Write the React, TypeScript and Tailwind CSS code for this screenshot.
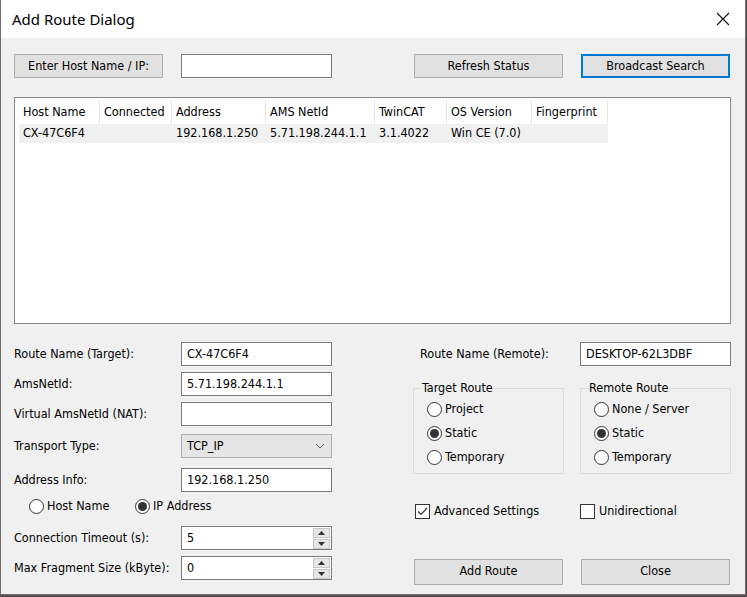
import React from "react";

const ui = { fontFamily: '"DejaVu Sans Condensed", "DejaVu Sans", sans-serif' };

function Btn({ label, w = "w-[149px]", focus = false }: { label: string; w?: string; focus?: boolean }) {
	return (
		<div
			className={`${w} h-[24px] flex items-center justify-center bg-[#e1e1e1] text-[12.5px] text-black ${
				focus ? "border-2 border-[#0078d7]" : "border border-[#adadad]"
			}`}
		>
			{label}
		</div>
	);
}

function TextBox({ value = "", w = "w-[151px]" }: { value?: string; w?: string }) {
	return (
		<div className={`${w} h-[24px] flex items-center border border-[#7a7a7a] bg-white pl-[5px] text-[12.5px] text-black`}>
			{value}
		</div>
	);
}

function Spin({ value }: { value: string }) {
	return (
		<div className="w-[151px] h-[24px] flex items-center border border-[#7a7a7a] bg-white pl-[5px] text-[12.5px] text-black">
			<span className="flex-1">{value}</span>
			<div className="flex flex-col gap-[1px] mr-[1px]">
				<div className="w-[17px] h-[10px] flex items-center justify-center bg-[#e6e6e6] border border-[#c8c8c8]">
					<svg width="7" height="4" viewBox="0 0 7 4">
						<path d="M0 4 L3.5 0 L7 4 Z" fill="#333" />
					</svg>
				</div>
				<div className="w-[17px] h-[10px] flex items-center justify-center bg-[#e6e6e6] border border-[#c8c8c8]">
					<svg width="7" height="4" viewBox="0 0 7 4">
						<path d="M0 0 L3.5 4 L7 0 Z" fill="#333" />
					</svg>
				</div>
			</div>
		</div>
	);
}

function Radio({ label, checked = false }: { label: string; checked?: boolean }) {
	return (
		<div className="flex items-center h-[24px] text-[12.5px] text-black">
			<div className="w-[15px] h-[15px] rounded-full border border-[#333] bg-white flex items-center justify-center mr-[3px]">
				{checked && <div className="w-[9px] h-[9px] rounded-full bg-[#333]" />}
			</div>
			{label}
		</div>
	);
}

function Check({ label, checked = false }: { label: string; checked?: boolean }) {
	return (
		<div className="flex items-center text-[12.5px] text-black">
			<div className="w-[15px] h-[15px] border border-[#333] bg-white flex items-center justify-center mr-[4px]">
				{checked && (
					<svg width="11" height="9" viewBox="0 0 11 9">
						<path d="M1 4.5 L4 7.5 L10 1" fill="none" stroke="#333" strokeWidth="1.2" />
					</svg>
				)}
			</div>
			{label}
		</div>
	);
}

function Group({ title, items }: { title: string; items: [string, boolean][] }) {
	return (
		<fieldset className="w-[151px] h-[95px] border border-[#dcdcdc] pl-[13px] pt-[0px]">
			<legend className="ml-[-6px] px-[1px] text-[12.5px] text-black">{title}</legend>
			<div className="flex flex-col">
				{items.map(([l, c]) => (
					<Radio key={l} label={l} checked={c} />
				))}
			</div>
		</fieldset>
	);
}

const cols = [
	{ h: "Host Name", w: "w-[81px]", v: "CX-47C6F4" },
	{ h: "Connected", w: "w-[72px]", v: "" },
	{ h: "Address", w: "w-[94px]", v: "192.168.1.250" },
	{ h: "AMS NetId", w: "w-[109px]", v: "5.71.198.244.1.1" },
	{ h: "TwinCAT", w: "w-[72px]", v: "3.1.4022" },
	{ h: "OS Version", w: "w-[85px]", v: "Win CE (7.0)" },
	{ h: "Fingerprint", w: "w-[76px]", v: "" },
];

function Label({ text }: { text: string }) {
	return <div className="w-[167px] text-[12.5px] text-black">{text}</div>;
}

export default function App() {
	return (
		<div className="w-[747px] h-[597px] bg-[#5a4a50]" style={ui}>
			<div className="w-[746px] h-[595px] flex flex-col border-x border-b border-[#6e6e6e] bg-[#f0f0f0]">
				<div className="h-[38px] bg-white flex items-center justify-between pl-[11px] pr-[15px]">
					<span className="text-[15px] text-black" style={{ fontFamily: '"Noto Sans", "Open Sans", sans-serif' }}>
						Add Route Dialog
					</span>
					<svg width="14" height="14" viewBox="0 0 14 14">
						<path d="M1 1 L13 13 M13 1 L1 13" stroke="#111" strokeWidth="1.1" />
					</svg>
				</div>

				<div className="flex-1 pl-[13px]">
					<div className="mt-[16px] flex items-center">
						<Btn label="Enter Host Name / IP:" />
						<div className="ml-[18px]">
							<TextBox />
						</div>
						<div className="ml-[82px]">
							<Btn label="Refresh Status" />
						</div>
						<div className="ml-[18px]">
							<Btn label="Broadcast Search" focus />
						</div>
					</div>

					<div className="mt-[19px] w-[717px] h-[227px] border border-[#828790] bg-white pt-[2px] pl-[4px] text-[12.5px] text-black">
						<div className="flex h-[24px]">
							{cols.map((c) => (
								<div key={c.h} className={`${c.w} flex items-center pl-[4px] border-r border-[#e5e5e5]`}>
									{c.h}
								</div>
							))}
						</div>
						<div className="flex h-[19px] bg-[#f0f0f0] w-fit">
							{cols.map((c) => (
								<div key={c.h} className={`${c.w} flex items-center pl-[4px]`}>
									{c.v}
								</div>
							))}
						</div>
					</div>

					<div className="mt-[18px] flex">
						<div className="w-[399px] flex flex-col">
							<div className="flex items-center">
								<Label text="Route Name (Target):" />
								<TextBox value="CX-47C6F4" />
							</div>
							<div className="flex items-center mt-[6px]">
								<Label text="AmsNetId:" />
								<TextBox value="5.71.198.244.1.1" />
							</div>
							<div className="flex items-center mt-[6px]">
								<Label text="Virtual AmsNetId (NAT):" />
								<TextBox />
							</div>
							<div className="flex items-center mt-[8px]">
								<Label text="Transport Type:" />
								<div className="w-[151px] h-[24px] flex items-center justify-between border border-[#adadad] bg-[#e5e5e5] pl-[5px] pr-[6px] text-[12.5px] text-black">
									TCP_IP
									<svg width="10" height="6" viewBox="0 0 10 6">
										<path d="M1 1 L5 5 L9 1" fill="none" stroke="#555" strokeWidth="1" />
									</svg>
								</div>
							</div>
							<div className="flex items-center mt-[10px]">
								<Label text="Address Info:" />
								<TextBox value="192.168.1.250" />
							</div>
							<div className="flex items-center mt-[2px] pl-[15px]">
								<div className="w-[106px]">
									<Radio label="Host Name" />
								</div>
								<Radio label="IP Address" checked />
							</div>
							<div className="flex items-center mt-[8px]">
								<Label text="Connection Timeout (s):" />
								<Spin value="5" />
							</div>
							<div className="flex items-center mt-[6px]">
								<Label text="Max Fragment Size (kByte):" />
								<Spin value="0" />
							</div>
						</div>

						<div className="flex flex-col">
							<div className="flex items-center">
								<div className="w-[167px] pl-[7px] text-[12.5px] text-black">Route Name (Remote):</div>
								<TextBox value="DESKTOP-62L3DBF" />
							</div>
							<div className="flex mt-[13px] gap-[16px]">
								<Group title="Target Route" items={[["Project", false], ["Static", true], ["Temporary", false]]} />
								<Group title="Remote Route" items={[["None / Server", false], ["Static", true], ["Temporary", false]]} />
							</div>
							<div className="flex mt-[28px] pl-[2px]">
								<div className="w-[165px]">
									<Check label="Advanced Settings" checked />
								</div>
								<Check label="Unidirectional" />
							</div>
							<div className="flex mt-[38px] ml-[1px] gap-[18px]">
								<Btn label="Add Route" w="w-[149px] h-[26px]" />
								<Btn label="Close" w="w-[149px] h-[26px]" />
							</div>
						</div>
					</div>
				</div>
			</div>
		</div>
	);
}
